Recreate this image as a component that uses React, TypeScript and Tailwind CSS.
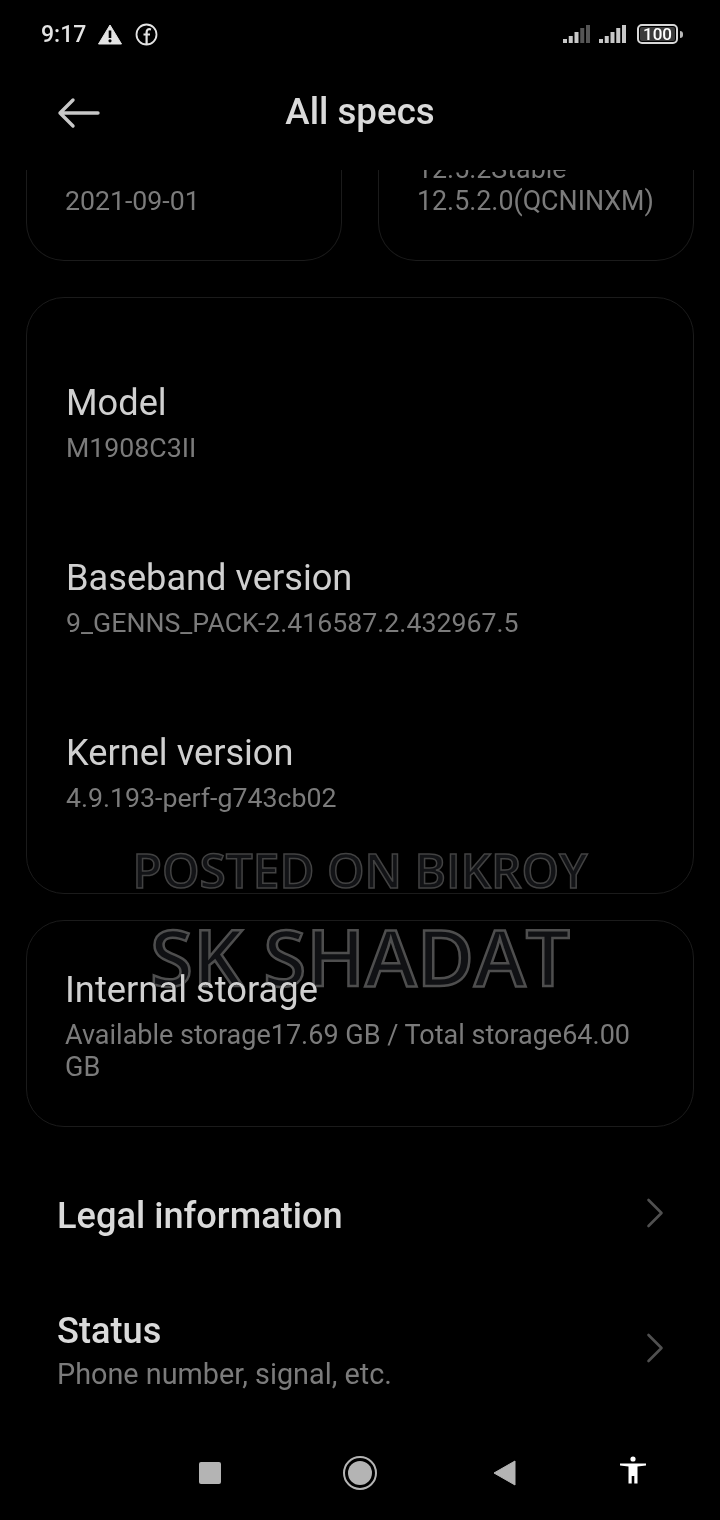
import { ChevronRight } from 'lucide-react'

function SignalBars({ dim = 0 }: { dim?: number }) {
  const heights = [4, 7, 11, 15, 18]
  return (
    <svg width="27" height="18" viewBox="0 0 27 18">
      {heights.map((h, i) => (
        <rect
          key={i}
          x={i * 5.75}
          y={18 - h}
          width="4"
          height={h}
          fill={i >= heights.length - dim ? '#555' : '#c8c8c8'}
        />
      ))}
    </svg>
  )
}

function StatusBar() {
  return (
    <div className="flex h-[68px] items-center justify-between pl-[41px] pr-[37px] text-[#e4e4e4]">
      <div className="flex items-center">
        <span className="text-[23px] font-medium leading-none">9:17</span>
        <svg className="ml-[12px]" width="24" height="21" viewBox="0 0 24 21">
          <path d="M12 1 L23.5 20 H0.5 Z" fill="#e4e4e4" stroke="#e4e4e4" strokeLinejoin="round" />
          <rect x="10.7" y="6.5" width="2.6" height="7.5" fill="#000" />
          <circle cx="12" cy="16.8" r="1.6" fill="#000" />
        </svg>
        <svg className="ml-[13px]" width="23" height="23" viewBox="0 0 23 23" fill="none" stroke="#e4e4e4">
          <circle cx="11.5" cy="11.5" r="10" strokeWidth="1.8" />
          <path d="M16 6.5 C13 5.6 11.6 7 11.6 9.5 V21 M8.5 11.5 H15" strokeWidth="2.2" />
        </svg>
      </div>
      <div className="flex items-center">
        <SignalBars dim={2} />
        <div className="ml-[9px]">
          <SignalBars />
        </div>
        <div className="ml-[11px] flex h-[20px] w-[41px] items-center rounded-[5px] border-2 border-[#d8d8d8] p-px">
          <div className="flex h-full w-full items-center justify-center rounded-[2px] bg-[#3a3a3a] text-[17px] font-medium leading-none text-white">
            100
          </div>
        </div>
        <div className="ml-[2px] h-[7px] w-[3px] rounded-r-sm bg-[#b8b8b8]" />
      </div>
    </div>
  )
}

function SpecItem({ label, value, className = '' }: { label: string; value: string; className?: string }) {
  return (
    <div className={className}>
      <div className="text-[36.2px] leading-[40px] text-[#d0d0d0]">{label}</div>
      <div className="mt-[9px] text-[26.7px] leading-[32px] text-[#7b7b7b]">{value}</div>
    </div>
  )
}

function NavRow({ title, sub, className = '' }: { title: string; sub?: string; className?: string }) {
  return (
    <div className={`flex items-center justify-between pl-[57px] pr-[39px] ${className}`}>
      <div>
        <div className="text-[36.2px] font-medium leading-[44px] text-[#dadada]">{title}</div>
        {sub && <div className="mt-[3px] text-[28.8px] leading-[36px] text-[#7b7b7b]">{sub}</div>}
      </div>
      <ChevronRight className="mb-[5px] h-[52px] w-[52px] text-[#505050]" strokeWidth={1.2} />
    </div>
  )
}

export default function App() {
  return (
    <div className="relative flex h-[1520px] w-[720px] flex-col overflow-hidden bg-black font-['Roboto',sans-serif]">
      <StatusBar />

      {/* Title bar */}
      <div className="relative flex h-[102px] shrink-0 items-start justify-center pt-[23px]">
        <svg
          className="absolute left-[57px] top-[29px]"
          width="46"
          height="32"
          viewBox="0 0 46 32"
          fill="none"
          stroke="#c8c8c8"
          strokeWidth="3.4"
          strokeLinecap="round"
          strokeLinejoin="round"
        >
          <path d="M41 16 H3 M16 3 L3 16 L16 29" />
        </svg>
        <h1 className="text-[36.7px] font-medium leading-[42px] text-[#dadada]">All specs</h1>
      </div>

      <div className="flex flex-1 flex-col overflow-hidden">
        {/* Top cards, scrolled partly out of view */}
        <div className="flex gap-[36px] px-[26px]">
          <div className="flex h-[91px] w-[316px] flex-col overflow-hidden rounded-b-[38px] border border-t-0 border-[#1b1b1b] pb-[43px] pl-[38px]">
            <div className="mt-auto text-[26.7px] leading-[32px] text-[#7b7b7b]">2021-09-01</div>
          </div>
          <div className="flex h-[91px] w-[316px] flex-col justify-end overflow-hidden rounded-b-[38px] border border-t-0 border-[#1b1b1b] pb-[43px] pl-[38px]">
            <div className="shrink-0 text-[26.8px] leading-[32px] text-[#7b7b7b]">12.5.2Stable</div>
            <div className="shrink-0 text-[26.8px] leading-[32px] text-[#7b7b7b]">12.5.2.0(QCNINXM)</div>
          </div>
        </div>

        {/* Device details */}
        <div className="mx-[26px] mt-[36px] flex h-[597px] flex-col rounded-[38px] border border-[#1b1b1b] pl-[39px] pt-[85px]">
          <SpecItem label="Model" value="M1908C3II" />
          <SpecItem label="Baseband version" value="9_GENNS_PACK-2.416587.2.432967.5" className="mt-[94px]" />
          <SpecItem label="Kernel version" value="4.9.193-perf-g743cb02" className="mt-[94px]" />
        </div>

        {/* Storage */}
        <div className="mx-[26px] mt-[26px] h-[207px] rounded-[38px] border border-[#1b1b1b] pl-[38px] pr-[40px] pt-[49px]">
          <div className="text-[36.3px] leading-[40px] text-[#d0d0d0]">Internal storage</div>
          <div className="mt-[9px] text-[27px] leading-[32px] text-[#7b7b7b]">
            Available storage17.69 GB / Total storage64.00 GB
          </div>
        </div>

        <NavRow title="Legal information" className="mt-[60px]" />
        <NavRow title="Status" sub="Phone number, signal, etc." className="mt-[65px]" />
      </div>

      {/* Navigation bar */}
      <div className="flex h-[88px] shrink-0 items-center pb-[6px]">
        <div className="ml-[199px] h-[22px] w-[22px] rounded-[2px] bg-[#b4b4b4]" />
        <div className="ml-[122px] flex h-[34px] w-[34px] items-center justify-center rounded-full border-2 border-[#b4b4b4]">
          <div className="h-[24px] w-[24px] rounded-full bg-[#b4b4b4]" />
        </div>
        <svg className="ml-[116px]" width="24" height="26" viewBox="0 0 24 26">
          <path d="M22 1 V25 L1 13 Z" fill="#b4b4b4" stroke="#b4b4b4" strokeLinejoin="round" />
        </svg>
        <svg className="mb-[6px] ml-[102px]" width="28" height="28" viewBox="0 0 28 28" fill="#fff">
          <circle cx="14" cy="3" r="2.6" />
          <path d="M1 7.5 H27 V9.5 L18.5 10.5 V27.5 H15.3 V20 H12.7 V27.5 H9.5 V10.5 L1 9.5 Z" />
        </svg>
      </div>

      {/* Watermark, blended so the text under it stays readable */}
      <div className="pointer-events-none absolute left-0 right-0 top-[842px] flex flex-col items-center font-['Open_Sans',sans-serif] font-semibold mix-blend-lighten">
        <div className="text-[47.8px] leading-[56px] text-[#121316] [-webkit-text-stroke:1.5px_#424242]">POSTED ON BIKROY</div>
        <div className="mt-[14px] text-[78.2px] leading-[88px] text-[#101114] [-webkit-text-stroke:2.5px_#4e4e4e]">SK SHADAT</div>
      </div>
    </div>
  )
}
